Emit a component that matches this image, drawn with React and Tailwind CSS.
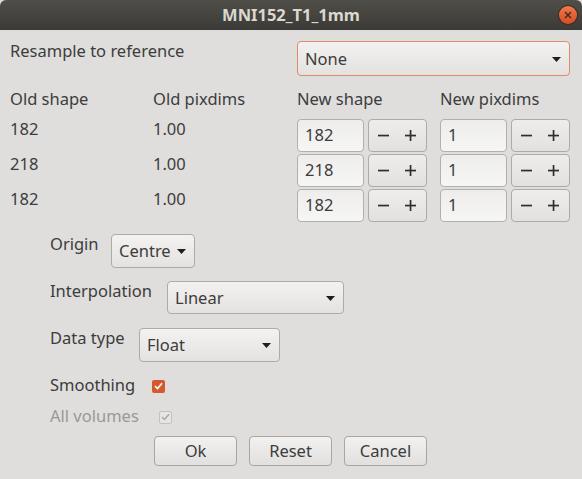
import React from "react";

const font = { fontFamily: '"Noto Sans", "DejaVu Sans", sans-serif' };

function Arrow() {
  return (
    <svg width="9" height="5" viewBox="0 0 9 5" className="shrink-0">
      <path d="M0 0 L9 0 L4.5 5 Z" fill="#1e1e1e" />
    </svg>
  );
}

function Combo({ value, className = "", focused = false }) {
  return (
    <div
      className={`flex items-center justify-between rounded-[4px] border bg-gradient-to-b from-[#f3f2f1] to-[#e3e2e0] pl-[7px] pr-[8px] pt-[1px] text-[#3c3c3c] ${
        focused ? "border-[#df8a68]" : "border-[#aeaba7]"
      } ${className}`}
    >
      <span>{value}</span>
      <Arrow />
    </div>
  );
}

function Spin({ value }) {
  return (
    <div className="flex h-[33px] items-stretch gap-[4px]">
      <div className="flex w-[67px] items-center rounded-[4px] border border-[#b3b0ac] bg-gradient-to-b from-[#eeedec] to-[#f6f6f5] pl-[7px] text-[#3c3c3c]">
        {value}
      </div>
      <div className="flex w-[59px] items-center justify-between rounded-[4px] border border-[#aeaba7] bg-gradient-to-b from-[#eeedeb] to-[#e2e1df] pl-[9px] pr-[10px]">
        <svg width="11" height="11" viewBox="0 0 11 11">
          <rect x="0" y="4.7" width="11" height="1.7" fill="#2e2e2e" />
        </svg>
        <svg width="11" height="11" viewBox="0 0 11 11">
          <rect x="0" y="4.7" width="11" height="1.7" fill="#2e2e2e" />
          <rect x="4.7" y="0" width="1.7" height="11" fill="#2e2e2e" />
        </svg>
      </div>
    </div>
  );
}

function Button({ children }) {
  return (
    <div className="flex h-[30px] w-[83px] items-center justify-center rounded-[4px] border border-[#a9a6a2] bg-gradient-to-b from-[#f2f1f0] to-[#e1e0de] text-[#3c3c3c]">
      {children}
    </div>
  );
}

export default function App() {
  return (
    <div
      className="flex h-[479px] w-[582px] flex-col overflow-hidden bg-[#dfdedc] text-[16.5px] text-[#3c3c3c]"
      style={font}
    >
      {/* Title bar */}
      <div className="relative flex h-[30px] shrink-0 items-center justify-center rounded-t-[6px] bg-gradient-to-b from-[#4f4e49] to-[#3b3a36]">
        <span className="text-[16.5px] font-bold text-[#dcd8cf]">MNI152_T1_1mm</span>
        <div className="absolute right-[5px] top-[6px] flex h-[18px] w-[18px] items-center justify-center rounded-full bg-gradient-to-b from-[#f0794d] to-[#d64b1e] shadow-[0_0_0_1px_#3a2a22]">
          <svg width="8" height="8" viewBox="0 0 8 8">
            <path d="M1 1 L7 7 M7 1 L1 7" stroke="#3b2a20" strokeWidth="1.4" />
          </svg>
        </div>
      </div>

      {/* Body */}
      <div className="flex flex-col px-[10px] pt-[11px]">
        <div className="grid grid-cols-[143px_144px_143px_130px]">
          <div className="col-span-2 pt-[1px] leading-[18px]">Resample to reference</div>
          <Combo value="None" focused className="col-span-2 h-[35px] w-[273px]" />

          <div className="mt-[13px] h-[20px] leading-[20px]">Old shape</div>
          <div className="mt-[13px] h-[20px] leading-[20px]">Old pixdims</div>
          <div className="mt-[13px] h-[20px] leading-[20px]">New shape</div>
          <div className="mt-[13px] h-[20px] leading-[20px]">New pixdims</div>
        </div>

        <div className="mt-[10px] grid grid-cols-[143px_144px_143px_130px] gap-y-[2px]">
          {[
            ["182", "1.00"],
            ["218", "1.00"],
            ["182", "1.00"],
          ].map(([s, p], i) => (
            <React.Fragment key={i}>
              <div className="h-[33px] leading-[20px]">{s}</div>
              <div className="h-[33px] leading-[20px]">{p}</div>
              <Spin value={s} />
              <Spin value="1" />
            </React.Fragment>
          ))}
        </div>

        <div className="ml-[40px] mt-[12px] flex flex-col gap-[14px]">
          <div className="flex items-start">
            <span className="w-[61px] whitespace-nowrap leading-[20px]">Origin</span>
            <Combo value="Centre" className="h-[34px] w-[84px]" />
          </div>
          <div className="-mt-[1px] flex items-start">
            <span className="w-[117px] whitespace-nowrap leading-[20px]">Interpolation</span>
            <Combo value="Linear" className="h-[33px] w-[177px]" />
          </div>
          <div className="mt-0 flex items-start">
            <span className="w-[89px] whitespace-nowrap leading-[20px]">Data type</span>
            <Combo value="Float" className="h-[34px] w-[141px]" />
          </div>
          <div className="-mt-[1px] flex items-center">
            <span className="w-[102px] whitespace-nowrap leading-[20px]">Smoothing</span>
            <div className="mt-[2px] flex h-[13px] w-[13px] items-center justify-center rounded-[2px] bg-[#d25a2c]">
              <svg width="9" height="8" viewBox="0 0 9 8">
                <path d="M1 4 L3.5 6.5 L8 1.2" stroke="#fff" strokeWidth="1.6" fill="none" />
              </svg>
            </div>
          </div>
          <div className="-mt-[3px] flex items-center text-[#9a9895]">
            <span className="w-[109px] whitespace-nowrap leading-[20px]">All volumes</span>
            <div className="mt-[2px] flex h-[13px] w-[13px] items-center justify-center rounded-[2px] border border-[#c4c2bf] bg-[#e6e5e3]">
              <svg width="9" height="8" viewBox="0 0 9 8">
                <path d="M1 4 L3.5 6.5 L8 1.2" stroke="#a8a6a3" strokeWidth="1.4" fill="none" />
              </svg>
            </div>
          </div>
        </div>

        <div className="ml-[144px] mt-[10px] flex gap-[12px]">
          <Button>Ok</Button>
          <Button>Reset</Button>
          <Button>Cancel</Button>
        </div>
      </div>
    </div>
  );
}
